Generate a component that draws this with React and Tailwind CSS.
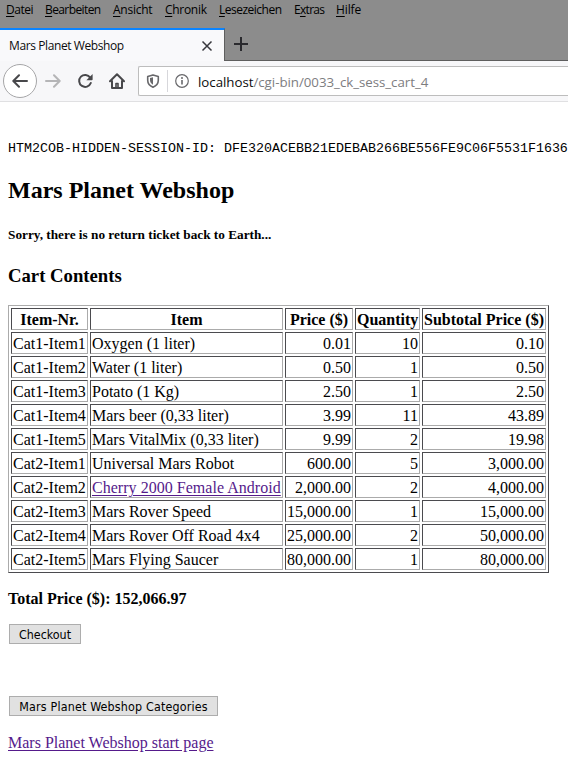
const MENU = [
  { pre: '', key: 'D', post: 'atei', cls: 'w-[39px] tracking-[-0.45px]' },
  { pre: '', key: 'B', post: 'earbeiten', cls: 'w-[68px] tracking-[-0.6px]' },
  { pre: '', key: 'A', post: 'nsicht', cls: 'w-[52px] tracking-[-0.25px]' },
  { pre: '', key: 'C', post: 'hronik', cls: 'w-[54px] tracking-[-0.3px]' },
  { pre: '', key: 'L', post: 'esezeichen', cls: 'w-[75px] tracking-[-0.5px]' },
  { pre: 'E', key: 'x', post: 'tras', cls: 'w-[42px] tracking-[-0.7px]' },
  { pre: '', key: 'H', post: 'ilfe', cls: 'w-[40px] tracking-[-0.1px]' },
];

const ITEMS = [
  ['Cat1-Item1', 'Oxygen (1 liter)', '0.01', '10', '0.10'],
  ['Cat1-Item2', 'Water (1 liter)', '0.50', '1', '0.50'],
  ['Cat1-Item3', 'Potato (1 Kg)', '2.50', '1', '2.50'],
  ['Cat1-Item4', 'Mars beer (0,33 liter)', '3.99', '11', '43.89'],
  ['Cat1-Item5', 'Mars VitalMix (0,33 liter)', '9.99', '2', '19.98'],
  ['Cat2-Item1', 'Universal Mars Robot', '600.00', '5', '3,000.00'],
  ['Cat2-Item2', 'Cherry 2000 Female Android', '2,000.00', '2', '4,000.00'],
  ['Cat2-Item3', 'Mars Rover Speed', '15,000.00', '1', '15,000.00'],
  ['Cat2-Item4', 'Mars Rover Off Road 4x4', '25,000.00', '2', '50,000.00'],
  ['Cat2-Item5', 'Mars Flying Saucer', '80,000.00', '1', '80,000.00'],
];

const CELL =
  'h-[22px] border border-t-[#4b4b4f] border-l-[#4b4b4f] border-r-[#ababab] border-b-[#ababab] px-px pt-px pb-0 leading-[19px] whitespace-nowrap';

function Menu() {
  return (
    <nav className="flex h-7 pl-[6px] pt-[2px] text-[12px] leading-4 text-black">
      {MENU.map((m) => (
        <span key={m.key} className={m.cls}>
          {m.pre}
          <span className="underline underline-offset-2">{m.key}</span>
          {m.post}
        </span>
      ))}
    </nav>
  );
}

function Tabs() {
  return (
    <div className="flex h-[33px]">
      <div className="flex w-[225px] items-center justify-between border-t-2 border-r border-t-[#0a84ff] border-r-[#5e5e5e] bg-[#f9f9fb] pl-[9px] pr-[11px]">
        <span className="text-[12px] leading-4 tracking-[-0.4px] text-[#0c0c0d]">Mars Planet Webshop</span>
        <svg className="size-3" viewBox="0 0 12 12" fill="none" stroke="#38383d" strokeWidth="1.5">
          <path d="M1.5 1.5l9 9M10.5 1.5l-9 9" />
        </svg>
      </div>
      <div className="flex-1 border-b border-[#5e5e5e] pl-[9px] pt-[9px]">
        <svg className="size-[14px]" viewBox="0 0 14 14" fill="none" stroke="#2a2a2e" strokeWidth="2">
          <path d="M7 0v14M0 7h14" />
        </svg>
      </div>
    </div>
  );
}

function Toolbar() {
  return (
    <div className="flex h-[41px] items-center border-b border-[#e0e0e2] bg-[#f7f7f9] pl-[3px]">
      <div className="flex size-[34px] shrink-0 items-center justify-center rounded-full border border-[#a6a6a8] bg-white">
        <svg className="size-4" viewBox="0 0 16 16" fill="none" stroke="#48484b" strokeWidth="2" strokeLinecap="round" strokeLinejoin="round">
          <path d="M15 8H1.5M7 2.3L1.3 8 7 13.7" />
        </svg>
      </div>
      <svg className="ml-2 size-4 shrink-0" viewBox="0 0 16 16" fill="none" stroke="#b5b5b7" strokeWidth="2" strokeLinecap="round" strokeLinejoin="round">
        <path d="M1 8h13.5M9 2.3L14.7 8 9 13.7" />
      </svg>
      <svg className="ml-4 size-4 shrink-0" viewBox="0 0 16 16">
        <path d="M13.2 4.6A6 6 0 1 0 13.8 10" fill="none" stroke="#48484b" strokeWidth="2" strokeLinecap="round" />
        <path d="M15.6 1v5.4q0 .8-.8.8H9.4z" fill="#48484b" />
      </svg>
      <svg className="ml-4 size-4 shrink-0" viewBox="0 0 16 16" fill="none" stroke="#48484b" strokeWidth="2" strokeLinecap="round" strokeLinejoin="round">
        <path d="M1 8.2L8 1.3l7 6.9M3 8v7h10V8" />
        <path d="M7 14v-3.5h2V14" strokeWidth="1.6" />
      </svg>
      <div className="ml-[13px] flex h-[30px] flex-1 items-center rounded-l-[2px] border border-r-0 border-[#bdbdbd] bg-white pl-[7px]">
        <svg className="size-[14px] shrink-0" viewBox="0 0 14 14">
          <path d="M7 .9l5.3 1.5v3.8c0 3.2-2 5.6-5.3 7-3.3-1.4-5.3-3.8-5.3-7V2.4z" fill="none" stroke="#68686b" strokeWidth="1.6" strokeLinejoin="round" />
          <path d="M7 3.2v7.5c-2-1-3-2.6-3-4.6V4.1z" fill="#68686b" />
        </svg>
        <div className="ml-[7px] h-[22px] w-px bg-[#d7d7db]" />
        <svg className="ml-[7px] size-[14px] shrink-0" viewBox="0 0 14 14">
          <circle cx="7" cy="7" r="6.3" fill="none" stroke="#68686b" strokeWidth="1.2" />
          <path d="M7 6v4.5" stroke="#68686b" strokeWidth="1.6" />
          <circle cx="7" cy="3.9" r="1" fill="#68686b" />
        </svg>
        <span className="ml-[9px] mt-px whitespace-nowrap text-[13.3px] leading-5 tracking-[-0.03px] text-[#7d7d7f]">
          <span className="text-[#0c0c0d]">localhost</span>/cgi-bin/0033_ck_sess_cart_4
        </span>
      </div>
    </div>
  );
}

function CartTable() {
  return (
    <table className="mt-[18px] w-[541px] table-fixed border-separate border-spacing-[2px] border border-t-[#ababab] border-l-[#ababab] border-r-[#4b4b4f] border-b-[#4b4b4f] text-[16px]">
      <colgroup>
        <col className="w-[77px]" />
        <col className="w-[193px]" />
        <col className="w-[68px]" />
        <col className="w-[65px]" />
        <col className="w-[124px]" />
      </colgroup>
      <thead>
        <tr>
          {['Item-Nr.', 'Item', 'Price ($)', 'Quantity', 'Subtotal Price ($)'].map((h) => (
            <th key={h} className={`${CELL} text-center font-bold`}>{h}</th>
          ))}
        </tr>
      </thead>
      <tbody>
        {ITEMS.map(([nr, name, price, qty, sub]) => (
          <tr key={nr}>
            <td className={CELL}>{nr}</td>
            <td className={CELL}>
              {nr === 'Cat2-Item2' ? <a className="tracking-[0.03px] text-[#551a8b] underline underline-offset-2">{name}</a> : name}
            </td>
            <td className={`${CELL} text-right`}>{price}</td>
            <td className={`${CELL} text-right`}>{qty}</td>
            <td className={`${CELL} text-right`}>{sub}</td>
          </tr>
        ))}
      </tbody>
    </table>
  );
}

const BUTTON =
  "ml-px block h-5 border border-[#adadad] bg-[#e1e1e1] pt-px text-center font-['DejaVu_Sans_Condensed','DejaVu_Sans',sans-serif] [font-stretch:condensed] text-[12.4px] leading-[17px] text-black whitespace-nowrap";

export default function App() {
  return (
    <div className="h-[766px] w-[568px] overflow-hidden bg-white">
      <header className="bg-[#8c8c8c] font-['Open_Sans','Noto_Sans',sans-serif]">
        <Menu />
        <Tabs />
        <Toolbar />
      </header>
      <main className="pl-2 pt-[39px] font-['Liberation_Serif',serif] text-black">
        <pre className="font-['Liberation_Mono',monospace] text-[13.33px] leading-4">
          HTM2COB-HIDDEN-SESSION-ID: DFE320ACEBB21EDEBAB266BE556FE9C06F5531F1636
        </pre>
        <h2 className="mt-[19px] text-[24px] font-bold leading-7">Mars Planet Webshop</h2>
        <h5 className="mt-[23px] text-[13.28px] font-bold leading-4">Sorry, there is no return ticket back to Earth...</h5>
        <h3 className="mt-[22px] text-[18.72px] font-bold leading-[22px]">Cart Contents</h3>
        <CartTable />
        <p className="mt-4 text-[16px] font-bold leading-5">Total Price ($): 152,066.97</p>
        <button className={`${BUTTON} mt-[15px] w-[72px]`}>Checkout</button>
        <button className={`${BUTTON} mt-[52px] w-[209px] tracking-[0.16px]`}>Mars Planet Webshop Categories</button>
        <a className="mt-[17px] block text-[16px] leading-5 text-[#551a8b] underline underline-offset-2">Mars Planet Webshop start page</a>
      </main>
    </div>
  );
}
